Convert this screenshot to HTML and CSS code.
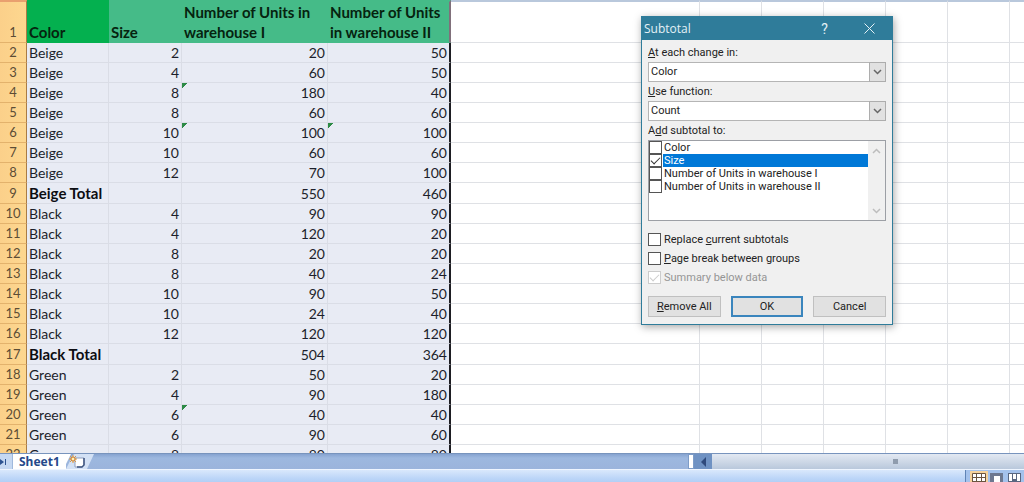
FILE: index.html
```html
<!DOCTYPE html>
<html lang="en">
<head>
  <meta charset="UTF-8" />
  <meta name="viewport" content="width=device-width, initial-scale=1.0"/>
  <title>Subtotal</title>
  <link rel="stylesheet" href="styles.css">
</head>
<body>

  <main class="sheet">
    <table class="grid">
      <colgroup>
        <col class="col-num">
        <col class="col-color">
        <col class="col-size">
        <col class="col-units1">
        <col class="col-units2">
        <col class="col-wide">
        <col class="col-std">
        <col class="col-std">
        <col class="col-std">
        <col class="col-std">
        <col class="col-std">
        <col>
      </colgroup>
      <thead>
        <tr>
          <th class="num" scope="row">1</th>
          <th class="head key" scope="col">Color</th>
          <th class="head" scope="col">Size</th>
          <th class="head" scope="col">Number of Units in warehouse I</th>
          <th class="head last" scope="col">Number of Units in warehouse II</th>
          <td></td><td></td><td></td><td></td><td></td><td></td><td></td>
        </tr>
      </thead>
      <tbody id="rows"></tbody>
    </table>
  </main>

  <footer>
    <div class="tabs">
      <button class="nav" type="button" aria-label="Last sheet">
        <svg width="8" height="8" viewBox="0 0 8 8"><path d="M0 1l4 3-4 3zM5 1h1v6H5z" fill="#2d5391"/></svg>
      </button>
      <a class="tab" href="#rows">Sheet1</a>
      <button class="new-sheet" type="button" aria-label="Insert sheet">
        <svg width="28" height="15" viewBox="0 0 28 15">
          <path d="M0 0h5L0 10z" fill="#fff"/>
          <path d="M0 15L7 1q1-1 2-1h19l-7 15z" fill="#d3e1f5"/>
          <path d="M9 4h9v7l-2 2H9z" fill="#fff" stroke="#8d9dbd"/>
          <path d="M18 4v7l-2 2h-5" fill="none" stroke="#3f5680" stroke-width="1.500"/>
          <path d="M7 1v8M3 5h8M4 2l6 6M10 2L4 8" stroke="#e09a3e"/>
          <circle cx="7" cy="5" r="2" fill="#fff0b8" stroke="#d0802c"/>
        </svg>
      </button>
      <div class="scrollbar">
        <span class="splitter"></span>
        <button class="scroll-left" type="button" aria-label="Scroll left">
          <svg width="5" height="10" viewBox="0 0 5 10"><path d="M5 0v10L0 5z" fill="#2f4a7c"/></svg>
        </button>
        <div class="thumb"><span class="grip"></span></div>
      </div>
    </div>
    <div class="status">
      <div class="views">
        <button class="view active" type="button" aria-label="Normal">
          <svg width="14" height="12" viewBox="0 0 14 12"><path d="M.5.5h13v11H.5zM0 4.500h14M0 8.500h14M4.500 0v12M9.500 0v12" fill="#fff" stroke="#6a5540"/></svg>
        </button>
        <button class="view" type="button" aria-label="Page layout">
          <svg width="14" height="12" viewBox="0 0 14 12"><path d="M0 0h13v12H0z" fill="#6d7890"/><path d="M4 3h6v9H4z" fill="#fff"/></svg>
        </button>
        <button class="view" type="button" aria-label="Page break preview">
          <svg width="14" height="12" viewBox="0 0 14 12"><path d="M0 0h13v12H0z" fill="#596680"/><path d="M1 1h3v7H1zM5 1h3v5H5zM9 1h3v7H9z" fill="#fff"/></svg>
        </button>
      </div>
    </div>
  </footer>

  <form class="dialog" role="dialog" aria-labelledby="title">
    <header class="titlebar">
      <h1 id="title">Subtotal</h1>
      <button type="button" class="help" aria-label="Help">?</button>
      <button type="button" class="close" aria-label="Close">
        <svg width="11" height="11" viewBox="0 0 11 11"><path d="M.5.5l10 10M10.500.5l-10 10" stroke="#e4f1f6"/></svg>
      </button>
    </header>

    <div class="content">
      <label for="change"><u>A</u>t each change in:</label>
      <div class="select">
        <select id="change"><option>Color</option><option>Size</option></select>
        <svg width="17" height="20" viewBox="0 0 15 18"><path d="M4 7l3.500 3.500L11 7" fill="none" stroke="#666" stroke-width="1.500"/></svg>
      </div>

      <label for="func"><u>U</u>se function:</label>
      <div class="select">
        <select id="func"><option>Count</option><option>Sum</option></select>
        <svg width="17" height="20" viewBox="0 0 15 18"><path d="M4 7l3.500 3.500L11 7" fill="none" stroke="#666" stroke-width="1.500"/></svg>
      </div>

      <div class="caption" id="addto">A<u>d</u>d subtotal to:</div>
      <div class="list" role="group" aria-labelledby="addto">
        <div class="items">
          <label class="item"><input type="checkbox"><span>Color</span></label>
          <label class="item selected"><input type="checkbox" checked><span>Size</span></label>
          <label class="item"><input type="checkbox"><span>Number of Units in warehouse I</span></label>
          <label class="item"><input type="checkbox"><span>Number of Units in warehouse II</span></label>
        </div>
        <div class="list-scroll">
          <svg width="9" height="6" viewBox="0 0 9 6"><path d="M1 5l3.500-3.500L8 5" fill="none" stroke="#bdbdbd" stroke-width="1.500"/></svg>
          <svg width="9" height="6" viewBox="0 0 9 6"><path d="M1 1l3.500 3.500L8 1" fill="none" stroke="#bdbdbd" stroke-width="1.500"/></svg>
        </div>
      </div>

      <div class="options">
        <label class="option"><input type="checkbox"><span>Replace <u>c</u>urrent subtotals</span></label>
        <label class="option"><input type="checkbox"><span><u>P</u>age break between groups</span></label>
        <label class="option disabled"><input type="checkbox" checked disabled><span>Summary below data</span></label>
      </div>

      <div class="actions">
        <button type="button"><u>R</u>emove All</button>
        <button type="button" class="default">OK</button>
        <button type="button">Cancel</button>
      </div>
    </div>
  </form>

  <script src="script.js"></script>
</body>
</html>
```
FILE: styles.css
```css
* {
  box-sizing: border-box;
}

body {
  margin: 0;
  height: 100vh;
  display: flex;
  flex-direction: column;
  overflow: hidden;
  background: white;
  font-family: Lato, Carlito, sans-serif;
  font-size: 14px;
  color: #1c1f2b;
}

button {
  margin: 0;
  padding: 0;
  border: none;
  background: none;
  font: inherit;
  color: inherit;
}

svg {
  display: block;
}

/* Sheet */
.sheet {
  flex: 1;
  min-height: 0;
  overflow: hidden;
}

.grid {
  width: 100%;
  table-layout: fixed;
  border-collapse: separate;
  border-spacing: 0;
}

.col-num { width: 27px; }
.col-color { width: 82px; }
.col-size { width: 73px; }
.col-units1 { width: 146px; }
.col-units2 { width: 123px; }
.col-wide { width: 249px; }
.col-std { width: 62px; }

.grid td,
.grid th {
  height: 20px;
  padding: 0 2px;
  line-height: 19px;
  border-right: 1px solid #dfe1e5;
  border-bottom: 1px solid #dfe1e5;
  white-space: nowrap;
}

.grid td:last-child {
  border-right: none;
}

.grid .data {
  background: #e8ebf4;
  border-color: #dadde6;
  text-align: right;
}

.grid .name {
  text-align: left;
}

.grid .total {
  height: 21px;
  font-size: 15px;
  font-weight: bold;
  color: #0c0d12;
}

.grid .num {
  padding: 0;
  background: linear-gradient(to right, #fbd08a, #fdd78f);
  border-right: 1px solid #a97c45;
  border-bottom-color: #e3b26c;
  color: #5c4d35;
  font-size: 13px;
  font-weight: normal;
  text-align: center;
}

.grid .head {
  background: #45bb88;
  border-color: #45bb88;
  color: #06230f;
  font-size: 15px;
  line-height: 20px;
  text-align: left;
  white-space: normal;
}

.grid thead th,
.grid thead td {
  height: 42px;
  border-top: 2px solid #b9c8dc;
  vertical-align: bottom;
}

.grid thead th {
  border-top-color: #e9a06f;
}

.grid .key {
  background: #04b04f;
  border-color: #04b04f;
}

.grid .data.last {
  border-right: 2px solid #1d1d22;
}

.grid .head.last {
  border-right: 2px solid #80707b;
}

/* Green error corner */
.grid .flag {
  background: linear-gradient(135deg, #2c8a45 4px, #e8ebf4 4px);
}

/* Sheet tabs and scrollbar */
.tabs {
  display: flex;
  height: 16px;
  background: linear-gradient(#86a3d0, #9db8df 4px, #9bb4dc);
  border-top: 1px solid #7894bd;
}

.nav {
  width: 13px;
  background: #c5d8f2;
  border-right: 1px solid #9fb9dd;
}

.tab {
  padding: 0 6px;
  background: white;
  color: #25498a;
  font: bold 12px/15px "Noto Sans", sans-serif;
  text-decoration: none;
}

.scrollbar {
  display: flex;
  width: 336px;
  margin-left: auto;
}

.splitter {
  width: 6px;
  background: white;
  border: 1px solid #7d9cc8;
}

.scroll-left {
  display: flex;
  align-items: center;
  justify-content: center;
  width: 18px;
  background: #6f92c3;
}

.thumb {
  flex: 1;
  display: flex;
  align-items: center;
  justify-content: center;
  padding-left: 54px;
  background: linear-gradient(#e3e9f2, #b9c8dc);
}

.grip {
  width: 5px;
  height: 5px;
  background: #8f9cad;
}

.status {
  display: flex;
  justify-content: flex-end;
  height: 13px;
  overflow: hidden;
  background: linear-gradient(#d9e8fc, #bdd6f8 8px, #b2cff6);
  border-top: 1px solid #eef5ff;
}

.views {
  display: flex;
  padding: 1px 0 0 4px;
  background: #a4c2ec;
  border-left: 1px solid #5f83b5;
}

.view {
  width: 18px;
  height: 16px;
  padding: 2px;
}

.view.active {
  background: #f5d29b;
}

/* Dialog */
.dialog {
  position: absolute;
  top: 16px;
  left: 641px;
  width: 252px;
  background: #f0f0f0;
  border: 1px solid #2f7c9a;
  box-shadow: 1px 2px 8px rgba(0, 0, 0, 0.35);
  font: 11px/16px Roboto, Tahoma, sans-serif;
  color: #222;
}

.titlebar {
  display: flex;
  align-items: center;
  height: 23px;
  padding-left: 2px;
  background: #2f7c9a;
  color: #e4f1f6;
}

.titlebar h1 {
  flex: 1;
  margin: 0;
  font: 12px/16px "Open Sans", sans-serif;
}

.help,
.close {
  display: flex;
  align-items: center;
  justify-content: center;
  width: 45px;
  height: 23px;
  font-size: 14px;
}

.content {
  padding: 5px 6px 7px;
}

.content > label,
.caption {
  display: block;
  height: 17px;
}

.select {
  position: relative;
  height: 20px;
  margin-bottom: 2px;
}

.select select {
  display: block;
  width: 100%;
  height: 20px;
  padding: 0 2px;
  border: 1px solid #b5b5b5;
  border-radius: 0;
  background: white;
  appearance: none;
  font: inherit;
  color: inherit;
}

.select svg {
  position: absolute;
  top: 0;
  right: 0;
  background: #e1e1e1;
  border: 1px solid #adadad;
  pointer-events: none;
}

.list {
  display: flex;
  height: 81px;
  background: white;
  border: 1px solid #9c9fa5;
}

.items {
  flex: 1;
}

.item {
  display: flex;
  height: 13px;
  line-height: 13px;
}

.item span {
  flex: 1;
  margin-left: 1px;
  padding-left: 1px;
}

.item.selected span {
  background: #0078d7;
  color: white;
}

.list-scroll {
  display: flex;
  flex-direction: column;
  align-items: center;
  justify-content: space-between;
  width: 17px;
  padding: 7px 0 6px;
  background: #f0f0f0;
}

input[type="checkbox"] {
  width: 13px;
  height: 13px;
  margin: 0;
  appearance: none;
  background: white;
  border: 1px solid #555;
}

input[type="checkbox"]:checked::before {
  content: "";
  display: block;
  width: 8px;
  height: 4px;
  margin: 2px 1px;
  border-left: 1px solid #333;
  border-bottom: 1px solid #333;
  transform: rotate(-45deg);
}

.options {
  padding-top: 9px;
}

.option {
  display: flex;
  align-items: center;
  gap: 3px;
  height: 19px;
}

.option.disabled {
  color: #959595;
}

.option.disabled input,
.option.disabled input:checked::before {
  border-color: #ccc;
}

.actions {
  display: grid;
  grid-template-columns: repeat(3, 1fr);
  gap: 10px;
  padding-top: 9px;
}

.actions button {
  height: 21px;
  background: #e1e1e1;
  border: 1px solid #c0c0c0;
}

.actions .default {
  border: 2px solid #3a85bd;
}
```
FILE: script.js
```js
// [name, size, warehouse I, warehouse II]
const rows = [
  ["Beige", 2, 20, 50],
  ["Beige", 4, 60, 50],
  ["Beige", 8, 180, 40],
  ["Beige", 8, 60, 60],
  ["Beige", 10, 100, 100],
  ["Beige", 10, 60, 60],
  ["Beige", 12, 70, 100],
  ["Beige Total", "", 550, 460],
  ["Black", 4, 90, 90],
  ["Black", 4, 120, 20],
  ["Black", 8, 20, 20],
  ["Black", 8, 40, 24],
  ["Black", 10, 90, 50],
  ["Black", 10, 24, 40],
  ["Black", 12, 120, 120],
  ["Black Total", "", 504, 364],
  ["Green", 2, 50, 20],
  ["Green", 4, 90, 180],
  ["Green", 6, 40, 40],
  ["Green", 6, 90, 60],
  ["Green", 8, 80, 80]
];

// Cells with a green error corner
const flags = ["4-2", "6-2", "6-3", "20-2"];
const emptyCells = 7;

const body = document.getElementById("rows");

rows.forEach(function (row, i) {
  const number = i + 2;
  const isTotal = row[1] === "";
  const tr = document.createElement("tr");

  let html = `<th class="num" scope="row">${number}</th>`;
  row.forEach(function (value, col) {
    const classes = ["data"];
    if (col === 0) classes.push("name");
    if (col === 0 && isTotal) classes.push("total");
    if (col === 3) classes.push("last");
    if (flags.includes(number + "-" + col)) classes.push("flag");
    html += `<td class="${classes.join(" ")}">${value}</td>`;
  });
  html += "<td></td>".repeat(emptyCells);

  tr.innerHTML = html;
  body.appendChild(tr);
});
```
